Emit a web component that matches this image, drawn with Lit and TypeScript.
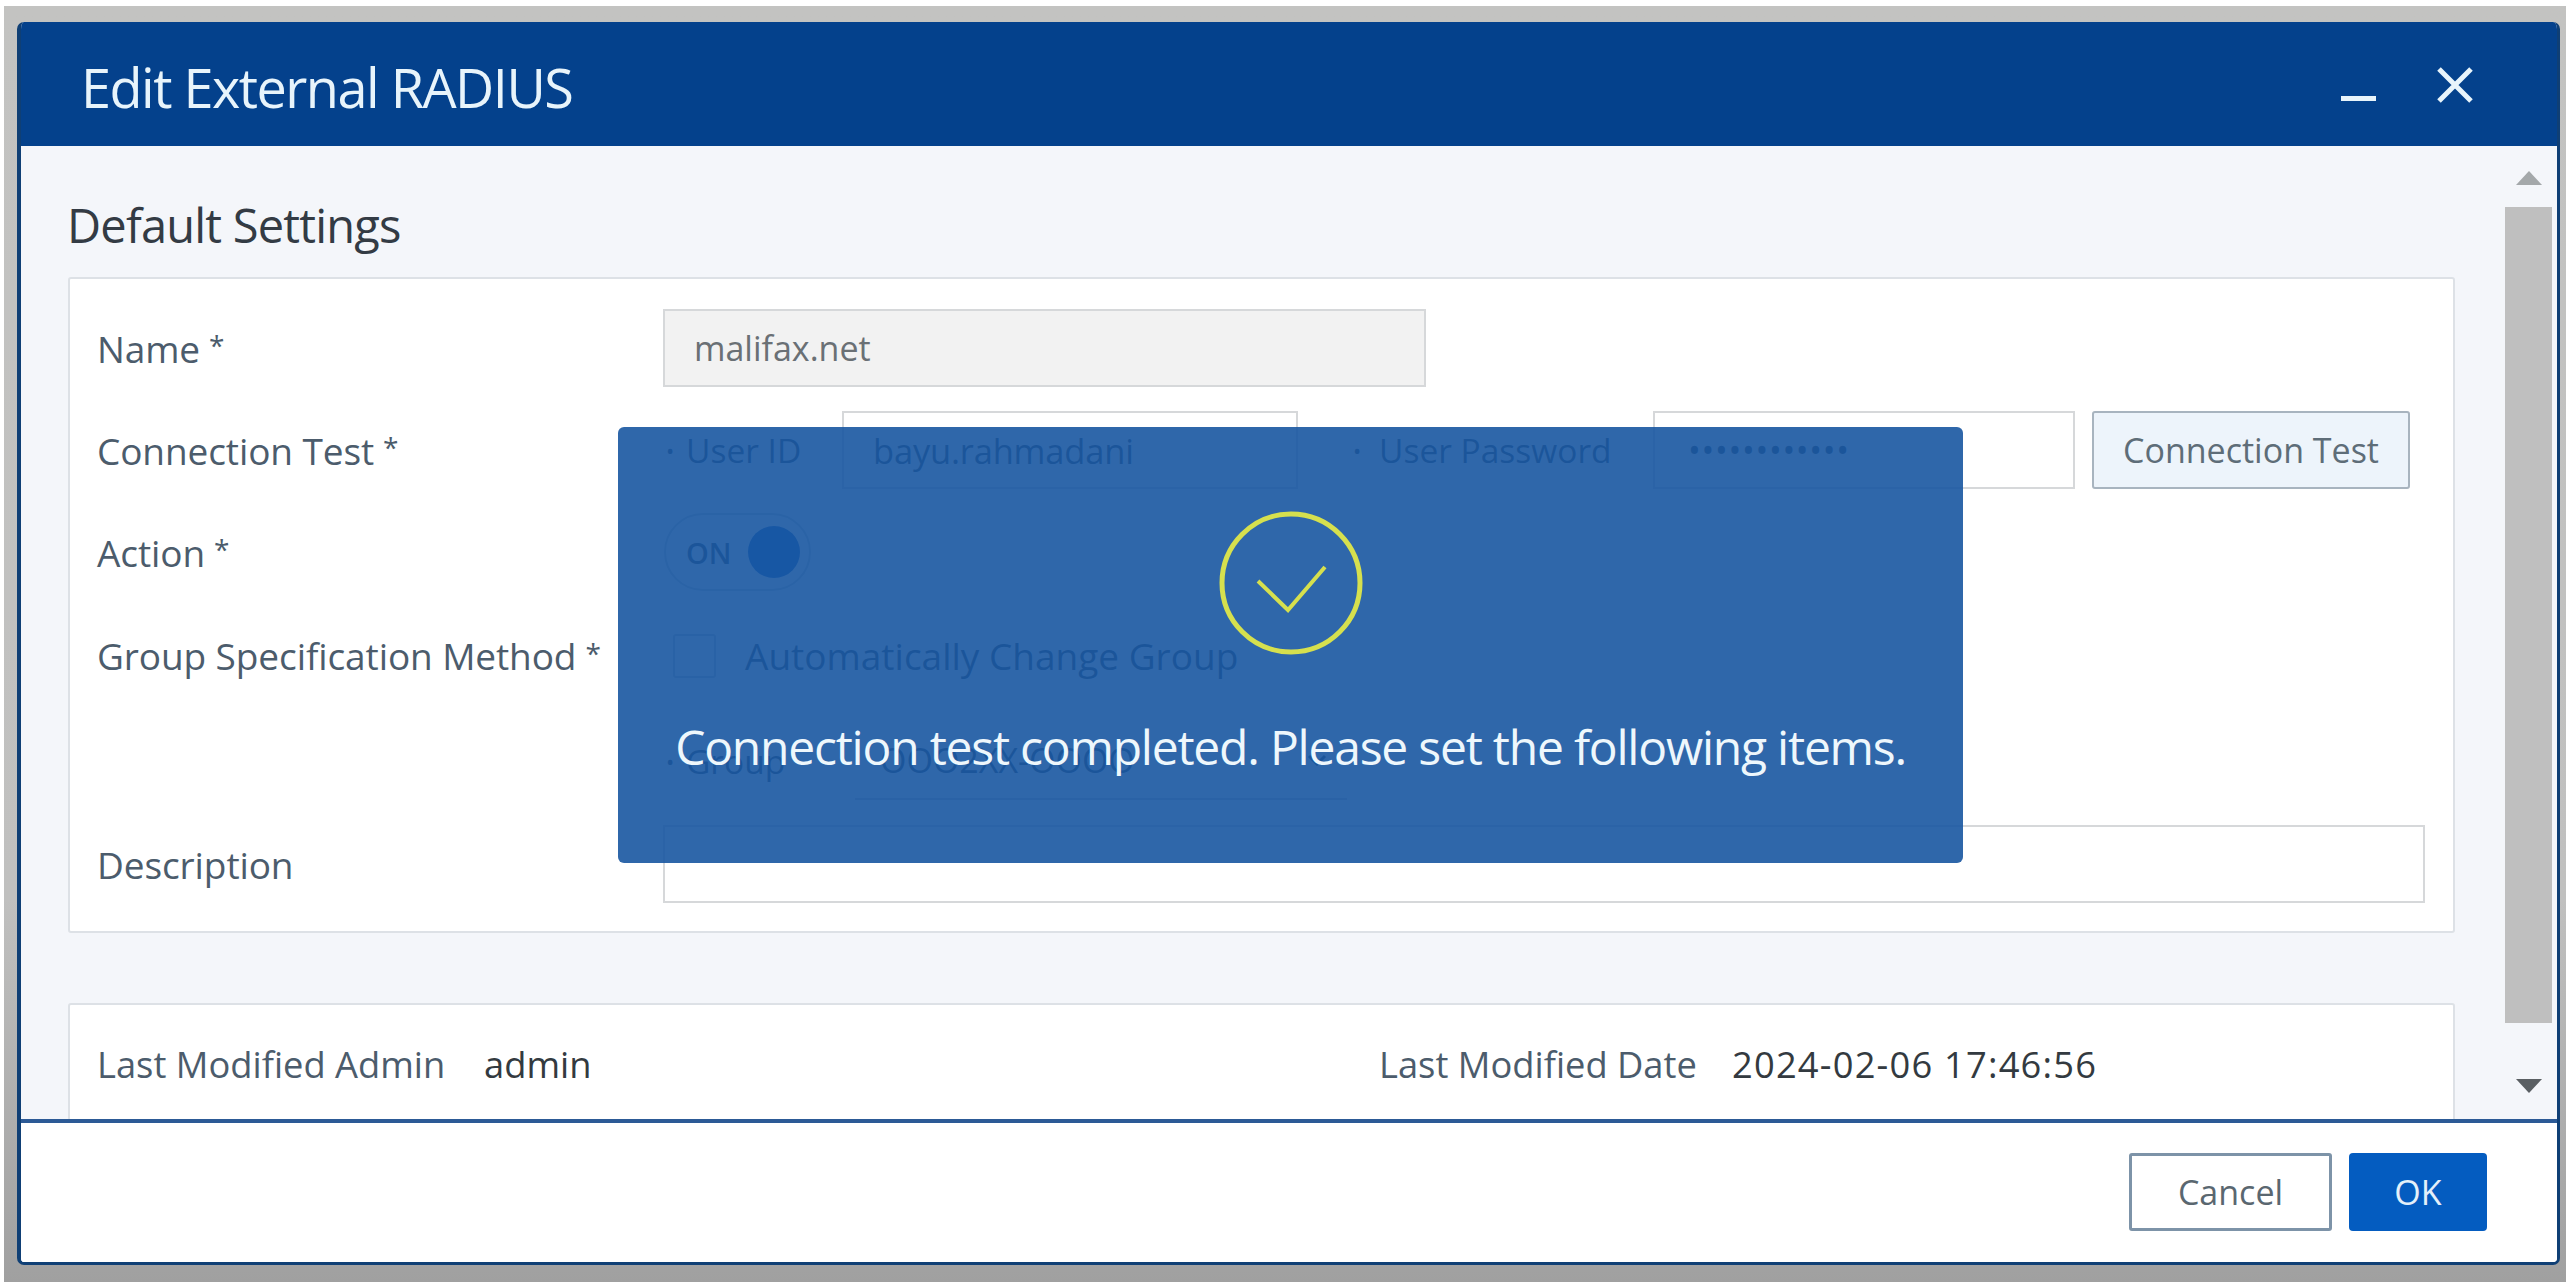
import { LitElement, html, css } from "lit";
import { customElement } from "lit/decorators.js";

@customElement("app-root")
export class AppRoot extends LitElement {
  static styles = css`
    :host { display: block; width: 2574px; height: 1282px; overflow: hidden; background: #fff; font-family: "Open Sans", "Noto Sans", sans-serif; }
    .frame { box-sizing: border-box; margin: 6px 8px 0 4px; height: 1276px; padding: 16px 6px 17px 13px; background: linear-gradient(#c3c3c1 0, #c0c0bf 70%, #a0a0a0 100%); display: flex; }
    .modal { position: relative; flex: 1; display: flex; flex-direction: column; border-radius: 7px; border: 3px solid #0f3f75; border-left-width: 4px; border-top: 0; background: #fff; overflow: hidden; }
    .head { height: 124px; flex: none; background: #04418c; display: flex; align-items: center; padding: 0 0 0 60px; color: #e8f4fb; }
    .title { font-size: 54px; letter-spacing: -1.5px; margin-top: 6px; white-space: nowrap; }
    .winbtns { margin-left: auto; align-self: flex-start; display: flex; align-items: flex-start; gap: 61px; padding: 45px 84px 0 0; }
    .min { width: 35px; height: 5px; background: #e8f4fb; margin-top: 29px; }
    .close { width: 36px; height: 36px; display: block; }
    .body { flex: 1; min-height: 0; display: flex; background: #f4f6fa; overflow: hidden; }
    .scroll-content { flex: 1; min-width: 0; padding: 51px 0 0 47px; }
    .heading { font-size: 47px; line-height: 56px; letter-spacing: -0.8px; color: #333b44; height: 80px; margin-left: -1px; }
    .panel { box-sizing: border-box; width: 2387px; background: #fff; border: 2px solid #dde1e6; border-radius: 3px; }
    .form { height: 656px; padding: 30px 28px 0 27px; display: grid; grid-template-columns: 566px 1fr; grid-template-rows: 78px 78px 78px 81px 81px 78px; row-gap: 24px; }
    .label { font-size: 37px; letter-spacing: -0.1px; color: #4c5c6c; white-space: nowrap; display: flex; align-items: center; }
    .req { margin-left: 9px; font-size: 28px; margin-top: -6px; }
    .input { box-sizing: border-box; height: 78px; border: 2px solid #d6d8da; background: #fff; font-size: 34px; color: #6a7075; display: flex; align-items: center; padding: 0 29px; }
    .name { width: 763px; background: #f2f2f2; }
    .line { display: flex; align-items: center; }
    .bullet { display: inline-block; font-size: 22px; }
    .sublabel { font-size: 33.5px; color: #3a4a5a; width: 179px; box-sizing: border-box; white-space: nowrap; padding-left: 3px; display: flex; align-items: center; }
    .sublabel .bullet { width: 20px; }
    .uid { width: 456px; font-size: 34.5px; color: #3a4a5a; letter-spacing: -0.2px; }
    .pwlabel { width: 355px; padding-left: 55px; box-sizing: border-box; font-size: 33.5px; color: #3a4a5a; white-space: nowrap; display: flex; align-items: center; }
    .pwlabel .bullet { width: 26px; }
    .pw { width: 422px; letter-spacing: 0.7px; padding-left: 33px; color: #3a4a5a; }
    .btn { box-sizing: border-box; width: 318px; height: 78px; margin-left: 17px; background: #edf4fb; border: 2px solid #a8b4bf; border-radius: 3px; color: #5e6d78; font-size: 34px; display: flex; align-items: center; justify-content: center; }
    .toggle { box-sizing: border-box; width: 147px; height: 78px; margin-left: 1px; border-radius: 39px; border: 2px solid #c8cfd8; display: flex; align-items: center; padding: 0 9px 0 20px; color: #3a4a5a; font-size: 29px; font-weight: 600; }
    .knob { width: 52px; height: 52px; border-radius: 50%; background: #0a5cc2; margin-left: auto; }
    .check { box-sizing: border-box; width: 43px; height: 44px; margin-left: 10px; border: 2px solid #c4cad0; border-radius: 3px; background: #fff; flex: none; }
    .checklabel { margin-left: 29px; font-size: 37px; color: #3a4a5a; white-space: nowrap; }
    .select { box-sizing: border-box; width: 492px; height: 78px; margin-left: 13px; border-bottom: 2px solid #c9cdd1; display: flex; align-items: center; justify-content: space-between; padding: 0 20px 0 25px; font-size: 34px; color: #3a4a5a; }
    .grouplabel { width: 179px; }
    .chev { width: 20px; height: 12px; display: block; }
    .desc { width: 100%; }
    .meta { margin-top: 70px; height: 200px; padding: 34px 0 0 27px; display: grid; grid-template-columns: 387px 895px 353px auto; justify-content: start; align-items: start; font-size: 36.3px; line-height: 50px; }
    .meta .k { color: #4c5c6c; white-space: nowrap; }
    .meta .v { color: #333a40; white-space: nowrap; }
    .meta .date { letter-spacing: 1.2px; }
    .sb { width: 47px; flex: none; margin-right: 5px; display: flex; flex-direction: column; align-items: center; }
    .up { margin-top: 25px; width: 0; height: 0; border: 13px solid transparent; border-top: 0; border-bottom: 14px solid #a4a8aa; }
    .thumb { width: 100%; margin-top: 22px; height: 816px; background: #bfbfbf; }
    .down { margin-top: 56px; width: 0; height: 0; border: 13px solid transparent; border-bottom: 0; border-top: 14px solid #5a5f63; }
    .foot { height: 143px; flex: none; box-sizing: border-box; border-top: 4px solid #2c5a96; background: #fff; display: flex; justify-content: flex-end; align-items: flex-start; padding: 30px 70px 0 0; gap: 17px; }
    .cancel { box-sizing: border-box; width: 203px; height: 78px; border: 3px solid #7d93a8; border-radius: 3px; display: flex; align-items: center; justify-content: center; font-size: 34px; color: #5a6770; }
    .ok { box-sizing: border-box; width: 138px; height: 78px; background: #045cc0; border-radius: 4px; color: #e4f0fa; display: flex; align-items: center; justify-content: center; font-size: 34px; }
    .toast { position: absolute; left: 597px; top: 405px; width: 1345px; height: 436px; background: rgba(24, 87, 161, 0.9); border-radius: 6px; display: flex; flex-direction: column; align-items: center; }
    .ok-icon { width: 146px; height: 146px; margin-top: 83px; display: block; }
    .msg { margin-top: 58px; font-size: 48px; font-weight: 500; letter-spacing: -1.22px; color: #eef7fc; white-space: nowrap; }
  `;

  render() {
    return html`
      <div class="frame">
        <div class="modal">
          <div class="head">
            <div class="title">Edit External RADIUS</div>
            <div class="winbtns">
              <div class="min"></div>
              <svg class="close" viewBox="0 0 36 36"><path d="M2 2 L34 34 M34 2 L2 34" stroke="#e8f4fb" stroke-width="5" fill="none"/></svg>
            </div>
          </div>
          <div class="body">
            <div class="scroll-content">
              <div class="heading">Default Settings</div>
              <div class="panel form">
                <div class="label">Name<span class="req">*</span></div>
                <div class="input name">malifax.net</div>

                <div class="label">Connection Test<span class="req">*</span></div>
                <div class="line">
                  <div class="sublabel"><span class="bullet">•</span>User ID</div>
                  <div class="input uid">bayu.rahmadani</div>
                  <div class="pwlabel"><span class="bullet">•</span>User Password</div>
                  <div class="input pw">••••••••••••</div>
                  <div class="btn">Connection Test</div>
                </div>

                <div class="label">Action<span class="req">*</span></div>
                <div class="line"><div class="toggle">ON<span class="knob"></span></div></div>

                <div class="label">Group Specification Method<span class="req">*</span></div>
                <div class="line"><div class="check"></div><div class="checklabel">Automatically Change Group</div></div>

                <div></div>
                <div class="line">
                  <div class="sublabel grouplabel"><span class="bullet">•</span>Group</div>
                  <div class="select">
                    <span>OOO2XX-OOOO</span>
                    <svg class="chev" viewBox="0 0 20 12"><path d="M2 2 L10 10 L18 2" fill="none" stroke="#3a4a5a" stroke-width="3"/></svg>
                  </div>
                </div>

                <div class="label">Description</div>
                <div class="input desc"></div>
              </div>
              <div class="panel meta">
                <span class="k">Last Modified Admin</span>
                <span class="v">admin</span>
                <span class="k">Last Modified Date</span>
                <span class="v date">2024-02-06 17:46:56</span>
              </div>
            </div>
            <div class="sb"><div class="up"></div><div class="thumb"></div><div class="down"></div></div>
          </div>
          <div class="foot"><div class="cancel">Cancel</div><div class="ok">OK</div></div>
          <div class="toast">
            <svg class="ok-icon" viewBox="0 0 146 146"><circle cx="73" cy="73" r="69" fill="none" stroke="#d6e04e" stroke-width="5"/><path d="M40 71 L70 100 L107 57" fill="none" stroke="#d6e04e" stroke-width="4"/></svg>
            <div class="msg">Connection test completed. Please set the following items.</div>
          </div>
        </div>
      </div>
    `;
  }
}
